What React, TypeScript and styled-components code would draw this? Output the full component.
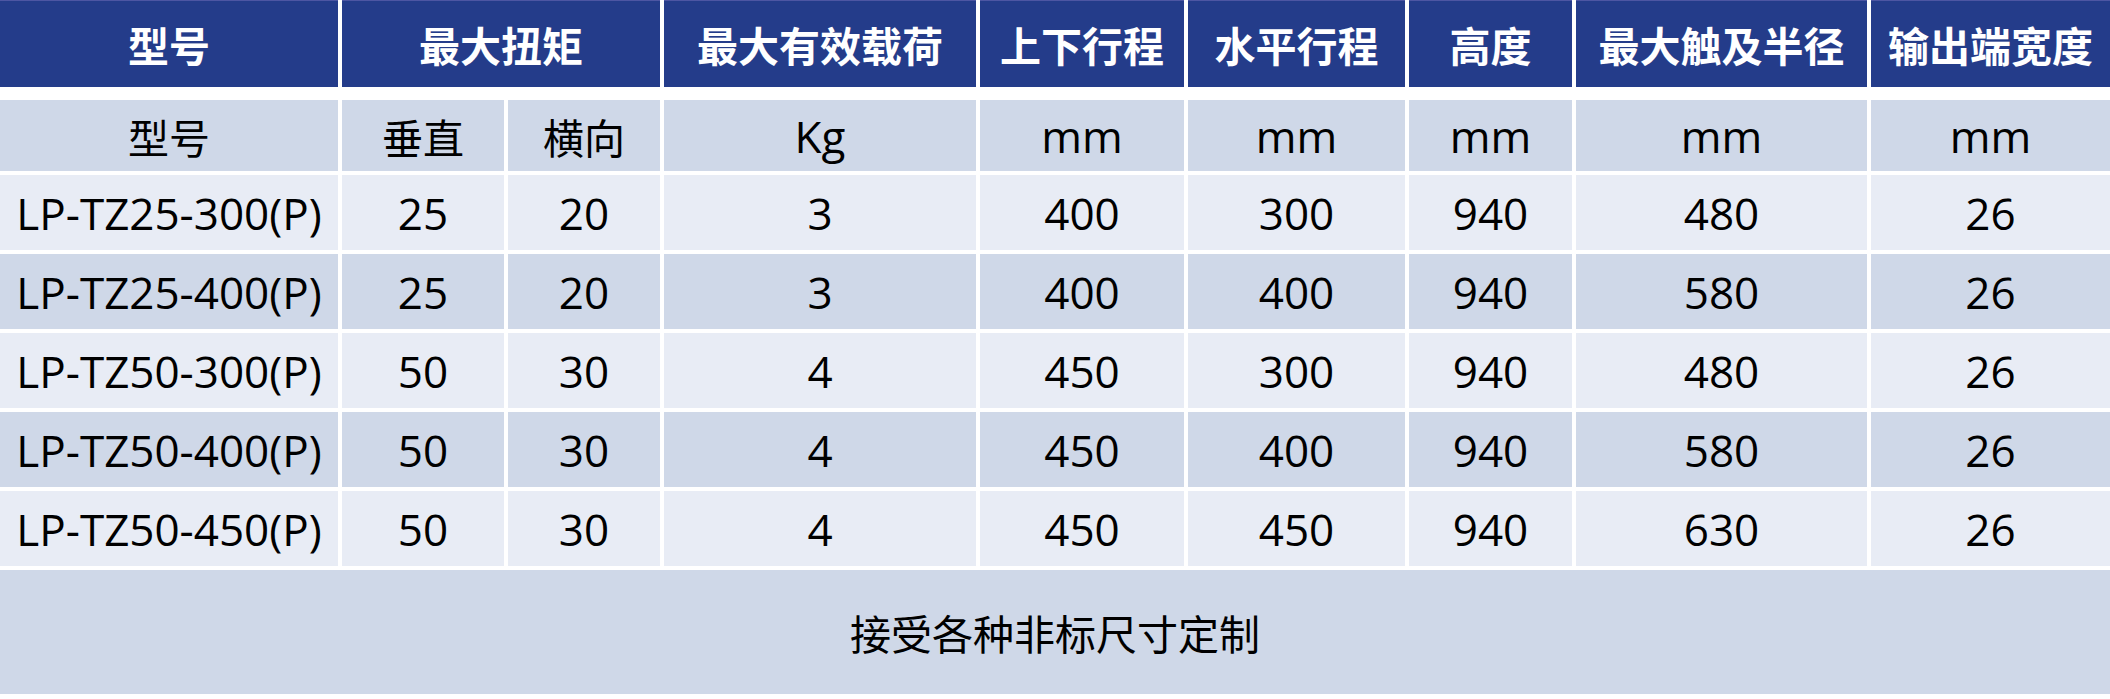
import React from "react"
import styled, { createGlobalStyle } from "styled-components"

const GlobalStyle = createGlobalStyle`
  html, body {
    margin: 0;
    padding: 0;
    background: #fff;
  }
  body {
    font-family: "Open Sans", "Noto Sans CJK SC", sans-serif;
  }
`

const columns = "338px 162px 152px 312px 204px 217px 163px 291px 1fr"

const rows = [
  { model: "LP-TZ25-300(P)", v: "25", h: "20", load: "3", up: "400", flat: "300", height: "940", reach: "480", out: "26" },
  { model: "LP-TZ25-400(P)", v: "25", h: "20", load: "3", up: "400", flat: "400", height: "940", reach: "580", out: "26" },
  { model: "LP-TZ50-300(P)", v: "50", h: "30", load: "4", up: "450", flat: "300", height: "940", reach: "480", out: "26" },
  { model: "LP-TZ50-400(P)", v: "50", h: "30", load: "4", up: "450", flat: "400", height: "940", reach: "580", out: "26" },
  { model: "LP-TZ50-450(P)", v: "50", h: "30", load: "4", up: "450", flat: "450", height: "940", reach: "630", out: "26" },
]

export default function App() {
  return (
    <>
      <GlobalStyle />
      <Table>
        <HeadRow>
          <HeadCell>型号</HeadCell>
          <HeadCell span={2}>最大扭矩</HeadCell>
          <HeadCell>最大有效载荷</HeadCell>
          <HeadCell>上下行程</HeadCell>
          <HeadCell>水平行程</HeadCell>
          <HeadCell>高度</HeadCell>
          <HeadCell>最大触及半径</HeadCell>
          <HeadCell>输出端宽度</HeadCell>
        </HeadRow>
        <Body>
          <UnitCell>型号</UnitCell>
          <UnitCell>垂直</UnitCell>
          <UnitCell>横向</UnitCell>
          <UnitCell>Kg</UnitCell>
          <UnitCell>mm</UnitCell>
          <UnitCell>mm</UnitCell>
          <UnitCell>mm</UnitCell>
          <UnitCell>mm</UnitCell>
          <UnitCell>mm</UnitCell>
          {rows.map((r, i) => {
            const shade = i % 2 === 1
            return (
              <React.Fragment key={r.model}>
                <Cell shade={shade}>{r.model}</Cell>
                <Cell shade={shade}>{r.v}</Cell>
                <Cell shade={shade}>{r.h}</Cell>
                <Cell shade={shade}>{r.load}</Cell>
                <Cell shade={shade}>{r.up}</Cell>
                <Cell shade={shade}>{r.flat}</Cell>
                <Cell shade={shade}>{r.height}</Cell>
                <Cell shade={shade}>{r.reach}</Cell>
                <Cell shade={shade}>{r.out}</Cell>
              </React.Fragment>
            )
          })}
          <Footer>接受各种非标尺寸定制</Footer>
        </Body>
      </Table>
    </>
  )
}

const Table = styled.div`
  width: 2110px;
  display: flex;
  flex-direction: column;
`

const HeadRow = styled.div`
  display: grid;
  grid-template-columns: ${columns};
  column-gap: 4px;
  height: 87px;
  margin-bottom: 13px;
`

const HeadCell = styled.div<{ span?: number }>`
  grid-column: span ${(p) => p.span || 1};
  display: flex;
  align-items: center;
  justify-content: center;
  background: #243c8a;
  border-top: 1px solid #4d56a3;
  color: #fff;
  font-family: "Noto Sans CJK SC", sans-serif;
  font-weight: 700;
  font-size: 41px;
  white-space: nowrap;
`

const Body = styled.div`
  display: grid;
  grid-template-columns: ${columns};
  grid-template-rows: 71px repeat(5, 75px) 124px;
  gap: 4px;
`

const Cell = styled.div<{ shade?: boolean }>`
  display: flex;
  align-items: center;
  justify-content: center;
  background: ${(p) => (p.shade ? "#cfd8e8" : "#e8ecf5")};
  color: #000;
  font-size: 44px;
  white-space: nowrap;
`

const UnitCell = styled(Cell)`
  background: #cfd8e8;
  font-family: "Open Sans", "Noto Sans CJK SC", sans-serif;
  &:nth-child(-n + 3) {
    font-size: 41px;
  }
`

const Footer = styled.div`
  grid-column: 1 / -1;
  display: flex;
  align-items: center;
  justify-content: center;
  background: #cfd8e8;
  color: #000;
  font-family: "Noto Sans CJK SC", sans-serif;
  font-size: 41px;
`
